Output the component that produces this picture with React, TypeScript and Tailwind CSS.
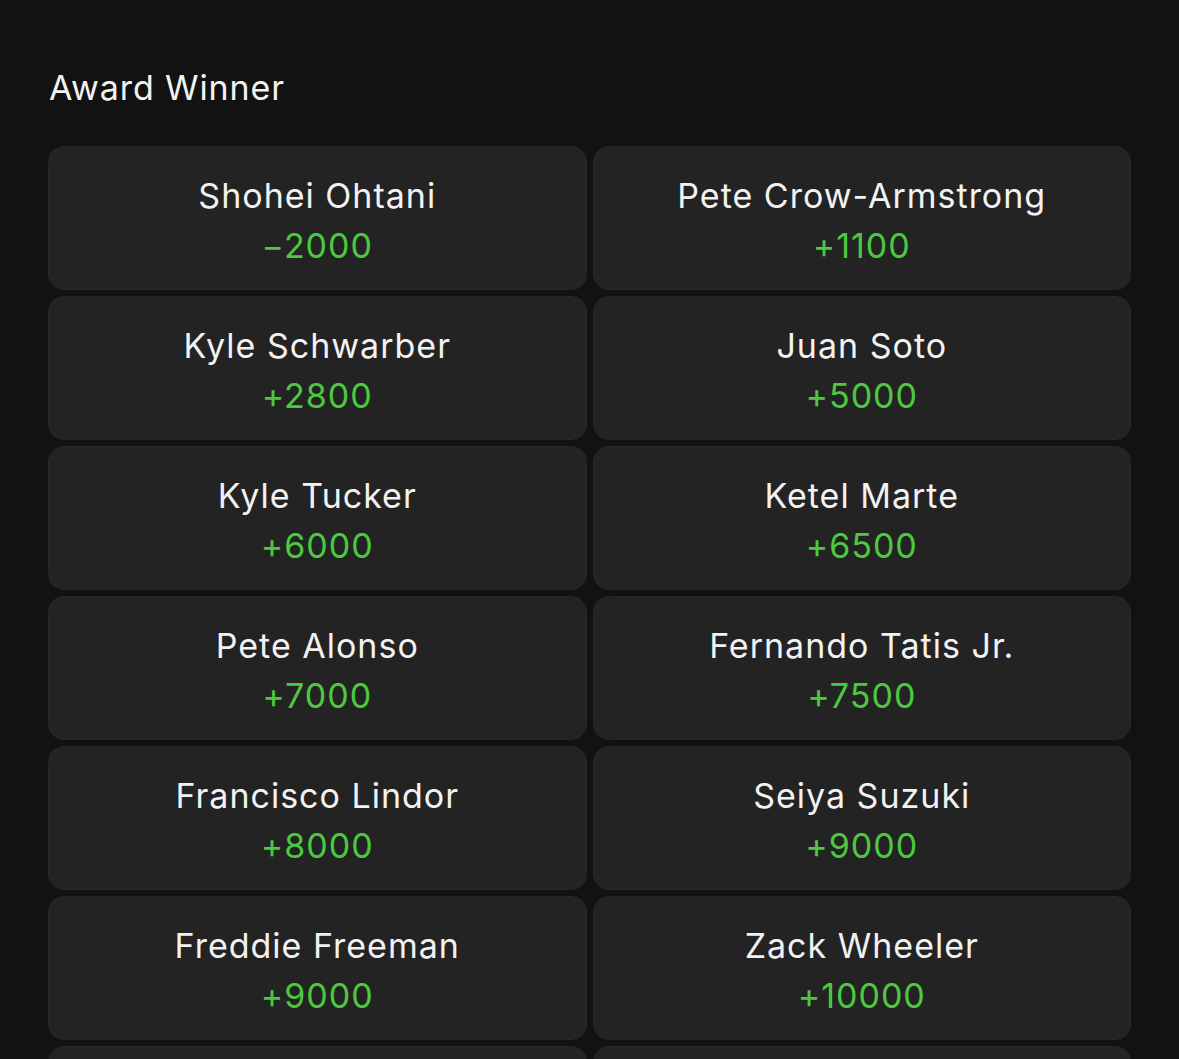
const PLAYERS: { name: string; odds: string }[] = [
  { name: "Shohei Ohtani", odds: "−2000" },
  { name: "Pete Crow-Armstrong", odds: "+1100" },
  { name: "Kyle Schwarber", odds: "+2800" },
  { name: "Juan Soto", odds: "+5000" },
  { name: "Kyle Tucker", odds: "+6000" },
  { name: "Ketel Marte", odds: "+6500" },
  { name: "Pete Alonso", odds: "+7000" },
  { name: "Fernando Tatis Jr.", odds: "+7500" },
  { name: "Francisco Lindor", odds: "+8000" },
  { name: "Seiya Suzuki", odds: "+9000" },
  { name: "Freddie Freeman", odds: "+9000" },
  { name: "Zack Wheeler", odds: "+10000" },
  { name: "Corbin Carroll", odds: "+12500" },
  { name: "Manny Machado", odds: "+15000" },
];

/* ─── Odds Card ─── */
function OddsCard({ name, odds }: { name: string; odds: string }) {
  return (
    <div className="h-[144px] rounded-[16px] bg-[#232323] border border-[#282828] flex flex-col items-center justify-center pt-[5px]">
      <div className="text-[34px] leading-[50px] text-[#f2f2f2] tracking-[1px]">{name}</div>
      <div className="text-[34px] leading-[50px] text-[#4cc93f] tracking-[1px]">{odds}</div>
    </div>
  );
}

export default function App() {
  return (
    <div
      className="min-h-screen bg-[#121212] px-[48px] pt-[66px]"
      style={{ fontFamily: "Inter, 'Noto Sans', sans-serif" }}
    >
      {/* Section title */}
      <h2 className="text-[34px] leading-[44px] text-[#f2f2f2] ml-[1px] mb-[36px] tracking-[0.9px]">
        Award Winner
      </h2>

      {/* Grid of players */}
      <div className="grid grid-cols-2 gap-[6px]">
        {PLAYERS.map((p) => (
          <OddsCard key={p.name} name={p.name} odds={p.odds} />
        ))}
      </div>
    </div>
  );
}
